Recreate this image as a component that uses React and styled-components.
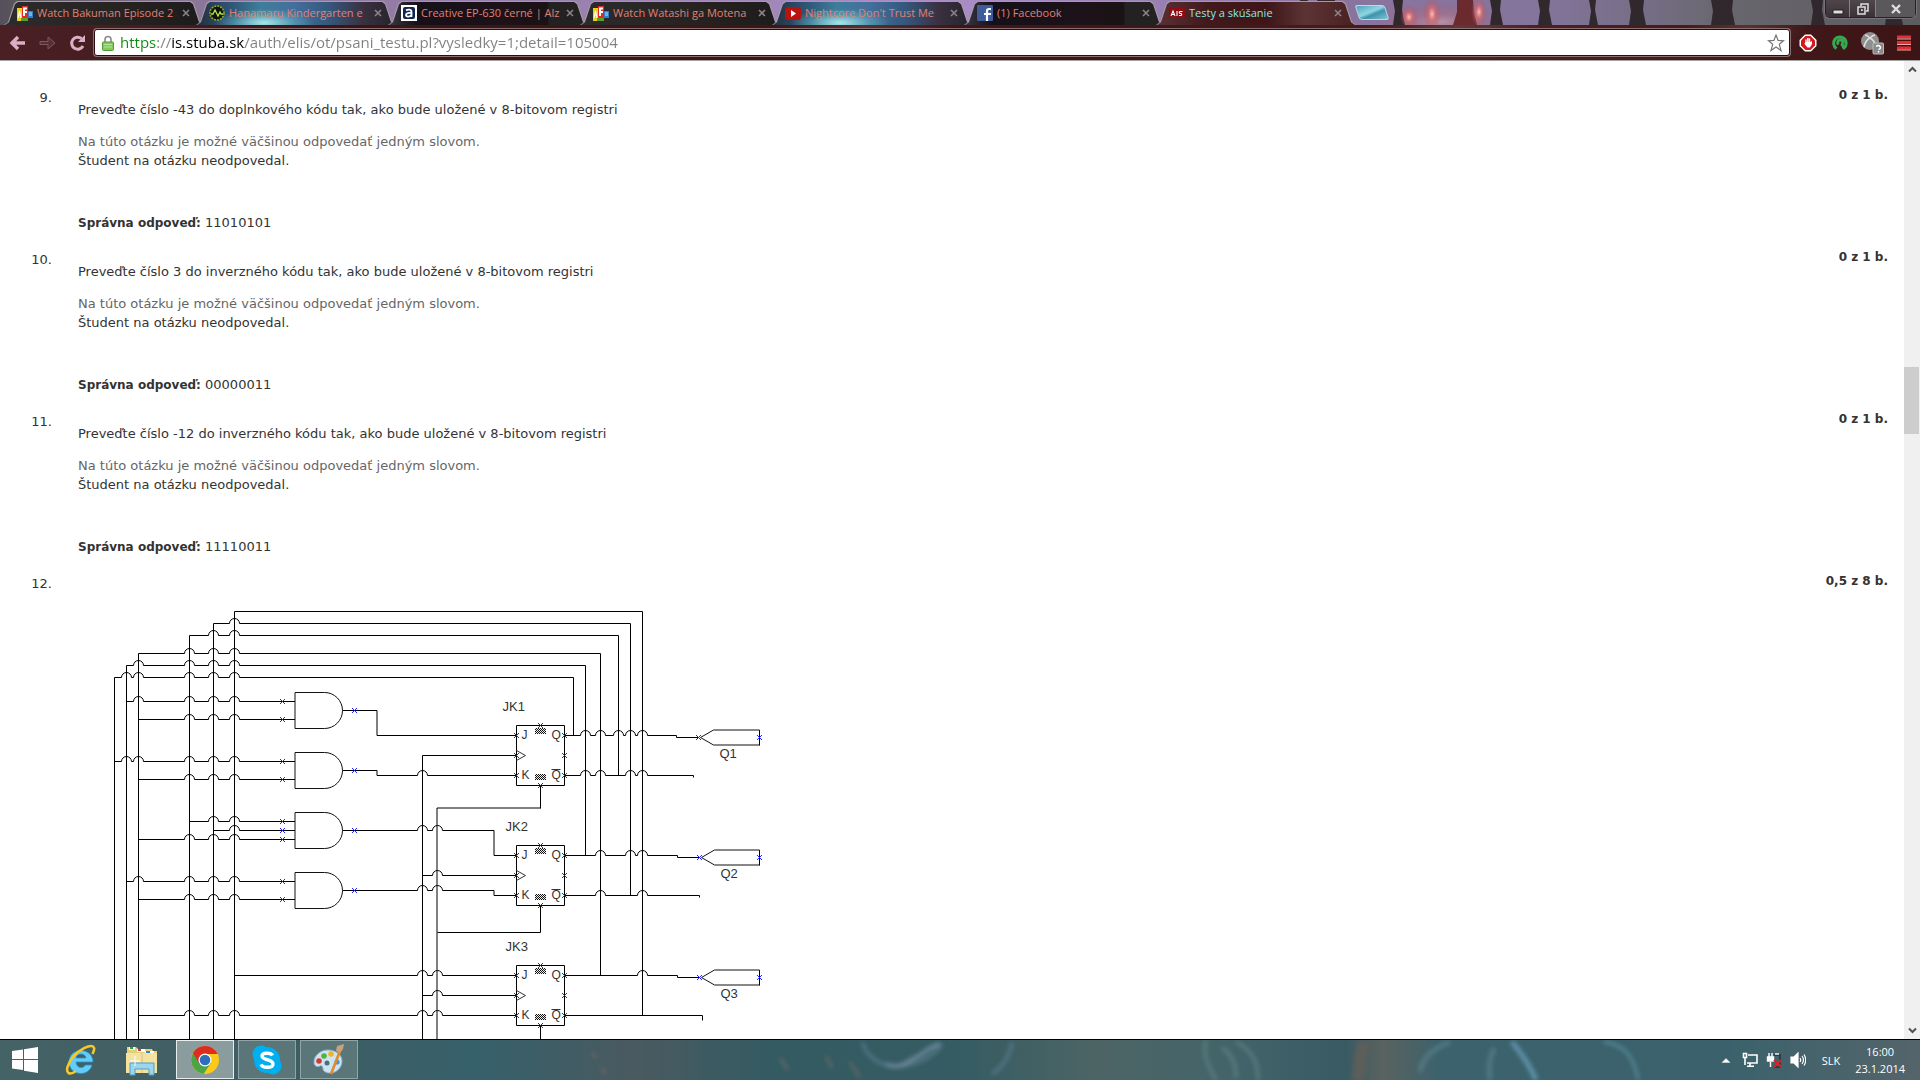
import React from 'react';
import styled, { createGlobalStyle } from 'styled-components';

const ui = '"Open Sans", "Noto Sans", sans-serif';

const Global = createGlobalStyle`
  * { box-sizing: border-box; }
  html, body { margin: 0; height: 100%; }
  body { overflow: hidden; background: #fff; }
  button { border: 0; padding: 0; background: none; font: inherit; color: inherit; cursor: pointer; }
  svg { display: block; flex: none; }
`;

const Screen = styled.div`
  display: flex;
  flex-direction: column;
  height: 100vh;
`;

/* ---------- browser frame ---------- */

const TabStrip = styled.header`
  position: relative;
  display: flex;
  height: 25px;
  padding-left: 4px;
  background: #8b78a0;
  overflow: hidden;
  font-family: ${ui};
`;

const Backdrop = styled.svg`
  position: absolute;
  inset: 0;
  width: 100%;
  height: 100%;
`;

const tones = {
  dark: 'linear-gradient(90deg, #2c2b2d, #262220 60%, #1d1b1c)',
  glow: 'radial-gradient(ellipse 50px 14px at 34% 90%, #a8e6ea, #5fb3c288 60%, transparent), linear-gradient(90deg, #24303e 0, #2f5878 18%, #3f7d9a 32%, #44709c 48%, #35597f 66%, #3a3040 84%, #25232a)',
  ember: 'linear-gradient(90deg, #38363f 0, #15101a 14%, #1d1218 60%, #1a1214 80%, #242122 81%)',
  active: 'linear-gradient(90deg, #5a3035, #421a1c 25%, #3f1517 55%, #5b3436 75%, #4a2022)',
};

const Tab = styled.div`
  position: relative;
  display: flex;
  align-items: center;
  flex: 0 1 192px;
  min-width: 0;
  height: 25px;
  padding: 0 5px 0 13px;
  font-size: 11px;
  line-height: 18px;
  color: ${(p) => (p.$tone === 'active' ? '#8be6ea' : '#e08074')};
  &::before, &::after {
    content: '';
    position: absolute;
    left: 0;
    right: -8px;
    bottom: 0;
    clip-path: polygon(0 100%, 4px 88%, 10px 10%, 13px 0, calc(100% - 13px) 0, calc(100% - 10px) 10%, calc(100% - 4px) 88%, 100% 100%);
  }
  &::before { top: 1px; background: #a79aa4; }
  &::after { top: 2px; left: 1px; right: -7px; background: ${(p) => tones[p.$tone]}; }
  > * { position: relative; z-index: 1; }
`;

const TabTitle = styled.button`
  flex: 1;
  min-width: 0;
  margin: 0 4px 0 4px;
  white-space: nowrap;
  text-align: left;
`;

const TabClose = styled.button`
  width: 10px;
  height: 10px;
  color: #8b8486;
`;

const NewTab = styled.button`
  position: relative;
  width: 30px;
  height: 15px;
  margin: 5px 0 0 9px;
  transform: skewX(18deg);
  border: 1px solid #b9dbe8;
  border-radius: 3px;
  background: linear-gradient(160deg, #4f9fba, #8fd6e2 45%, #3f92ac 60%, #7cc8d8);
`;

const WindowControls = styled.div`
  position: relative;
  display: flex;
  height: 18px;
  margin: 0 4px 0 auto;
  border: 1px solid #272325;
  border-top: 0;
  border-radius: 0 0 5px 5px;
  box-shadow: 0 0 0 1px #77727a;
`;

const WindowButton = styled.button`
  display: grid;
  place-items: center;
  width: ${(p) => p.$w}px;
  background: ${(p) => (p.$plain ? '#5a585a' : 'linear-gradient(#4e464b, #3a3236)')};
  & + & { border-left: 1px solid #8a8188; }
`;

const Toolbar = styled.div`
  display: flex;
  align-items: center;
  height: 36px;
  padding: 0 4px 0 6px;
  border-bottom: 1px solid #a5a2a4;
  background:
    radial-gradient(ellipse 90px 30px at 45% 0, #6b4a4a88, transparent),
    radial-gradient(ellipse 80px 30px at 76% 20%, #7a595988, transparent),
    radial-gradient(ellipse 60px 30px at 91% 10%, #7a595966, transparent),
    linear-gradient(90deg, #4a2024, #3c1416 20%, #401719 60%, #4a2022 80%, #3d1416);
`;

const NavButton = styled.button`
  display: grid;
  place-items: center;
  width: 24px;
  height: 24px;
  margin-right: ${(p) => p.$gap || 6}px;
`;

const AddressBar = styled.label`
  display: flex;
  align-items: center;
  flex: 1;
  height: 27px;
  margin-right: 6px;
  padding: 0 4px 0 7px;
  border: 1px solid #2a0d0f;
  border-radius: 3px;
  box-shadow: 0 0 0 1px #8b7071;
  background: #fff;
`;

const Url = styled.input`
  flex: 1;
  min-width: 0;
  height: 25px;
  margin-left: 6px;
  padding: 0 0 2px;
  border: 0;
  outline: 0;
  font: 15px/23px ${ui};
  color: #808080;
  background: linear-gradient(90deg, #0b8a12 37px, #808080 37px, #808080 51px, #000 51px, #000 125px, #808080 125px);
  background-clip: text;
  -webkit-text-fill-color: transparent;
`;

const Extensions = styled.div`
  display: flex;
  gap: 8px;
`;

const ExtButton = styled.button`
  display: grid;
  place-items: center;
  width: 24px;
  height: 24px;
`;

/* ---------- page ---------- */

const Viewport = styled.div`
  display: flex;
  flex: 1;
  min-height: 0;
`;

const Page = styled.main`
  flex: 1;
  min-width: 0;
  overflow: hidden;
  padding: 24px 16px 0 0;
  font: 13px/19px Verdana, "DejaVu Sans", sans-serif;
  color: #333;
`;

const Questions = styled.ol`
  margin: 0;
  padding: 0;
  list-style: none;
`;

const Question = styled.li`
  display: grid;
  grid-template-columns: 52px minmax(0, 1fr) auto;
  column-gap: 26px;
`;

const Ordinal = styled.span`
  padding-top: 3px;
  text-align: right;
`;

const Body = styled.div`
  padding: 15px 0;
`;

const Line = styled.p`
  margin: 0;
  margin-bottom: ${(p) => p.$after || 0}px;
  color: ${(p) => (p.$hint ? '#666' : '#333')};
  b { font-size: 12px; line-height: 16px; }
`;

const Score = styled.strong`
  font-size: 12px;
  line-height: 20px;
`;

const ScrollBar = styled.div`
  display: flex;
  flex-direction: column;
  align-items: center;
  width: 16px;
  background: #f0f0f0;
`;

const ScrollButton = styled.button`
  display: grid;
  place-items: center;
  width: 16px;
  height: 17px;
`;

const Track = styled.div`
  display: flex;
  flex-direction: column;
  flex: 1;
  width: 16px;
  &::before { content: ''; flex: 33; }
  &::after { content: ''; flex: 67; }
`;

const Thumb = styled.div`
  width: 15px;
  height: 67px;
  background: #cdcdcd;
`;

/* ---------- taskbar ---------- */

const TaskBar = styled.footer`
  position: relative;
  display: flex;
  align-items: stretch;
  height: 41px;
  border-top: 1px solid #000;
  background: #3a5f65;
  font: 11px/17px ${ui};
  color: #fff;
  overflow: hidden;
`;

const TaskButton = styled.button`
  position: relative;
  display: grid;
  place-items: center;
  width: ${(p) => p.$w}px;
  margin: 0 4px 1px 0;
  ${(p) => p.$open && `
    border: 1px solid ${p.$front ? '#e8eeee' : '#8fa5a8'};
    background: ${p.$front ? '#8b9c9f' : '#5b7679'};
  `}
`;

const Tray = styled.div`
  position: relative;
  display: flex;
  align-items: center;
  margin-left: auto;
  padding-right: 15px;
`;

const TrayIcons = styled.div`
  display: flex;
  align-items: center;
  gap: 8px;
  margin-right: 16px;
`;

const Clock = styled.time`
  margin-left: 15px;
  text-align: center;
`;

/* ---------- icons ---------- */

const WatchIcon = () => (
  <svg width="16" height="16" viewBox="0 0 16 16">
    <path d="M0 3h5v13H0z" fill="#e9d21f" /><path d="M5 1h6v12H5z" fill="#e02b20" />
    <path d="M4 13h7v3H4z" fill="#5a9e2c" /><path d="M11 6h5v7h-5z" fill="#2f7fd0" />
    <path d="M1 13l1.500-7L4 13M1.500 10h2" stroke="#fff" fill="none" />
    <path d="M7 11V3.500h3M7 7h3" stroke="#fff" strokeWidth="2" fill="none" />
    <path d="M12 8h3M12 10h3" stroke="#bfe0ff" fill="none" />
  </svg>
);
const PulseIcon = () => (
  <svg width="16" height="16" viewBox="0 0 16 16">
    <circle cx="8" cy="8" r="7" fill="#0d1408" stroke="#98a82e" strokeWidth="1.500" strokeDasharray="2 1" />
    <path d="M2 9h2l2-4 3 6 2-4 1 2h2" stroke="#b6e34a" strokeWidth="1.300" fill="none" />
  </svg>
);
const AlzaIcon = () => (
  <svg width="16" height="16" viewBox="0 0 16 16">
    <rect width="16" height="16" fill="#fff" /><rect x="2" y="2" width="12" height="12" rx="2" fill="#10264f" />
    <path d="M5 5.500c2-1.500 5.500-1.200 5.500 1.500v5M10 8c-2-.5-5 0-5 2s3.500 2.200 5.300 0" stroke="#fff" strokeWidth="1.800" fill="none" />
  </svg>
);
const TubeIcon = () => (
  <svg width="16" height="16" viewBox="0 0 16 16">
    <rect y="2" width="16" height="13" rx="3" fill="#b9120f" /><path d="M6 5l5 3.500L6 12z" fill="#fff" />
  </svg>
);
const FbIcon = () => (
  <svg width="16" height="16" viewBox="0 0 16 16">
    <rect width="16" height="16" rx="1" fill="#3f5c9c" />
    <path d="M14 4h-2q-2 0-2 2v10M7 9h7" stroke="#fff" strokeWidth="2.200" fill="none" />
  </svg>
);
const AisIcon = () => (
  <svg width="16" height="16" viewBox="0 0 16 16">
    <rect y="3" width="16" height="10" rx="1" fill="#8c0d12" />
    <path d="M2 11l2-5 2 5M2.500 9.500h3M8 6v5M13.500 6.500h-2.500q-1.500 1 0 2h1q1.500 1 0 2H10" stroke="#fff" strokeWidth="1.100" fill="none" />
  </svg>
);
const CrossIcon = () => (
  <svg width="10" height="10" viewBox="0 0 10 10"><path d="M2 2l6 6M8 2L2 8" stroke="currentColor" strokeWidth="1.600" /></svg>
);

const IEIcon = () => (
  <svg width="32" height="32" viewBox="0 0 32 32">
    <path d="M28 18H11c.5 3.500 2 5.500 5 5.500 2 0 3.400-.8 4.300-2.500h6.700C25.500 26.500 21 29.500 16 29.500 9 29.500 4 24.500 4 18S9 6.500 16 6.500s12 5 12 11.500zm-7-4c-.4-2.400-2.200-4-5-4s-4.500 1.600-5 4z" fill="#62cdf6" stroke="#2a8fd0" strokeWidth=".8" />
    <path d="M27.500 10c1.800-3.500 2.200-6.500.5-7.500C25 .5 15 5 8.500 12.500 2.500 19.500.5 27 3.500 29c1.800 1 4.500.2 7.500-2" stroke="#f6c927" strokeWidth="2.600" fill="none" />
  </svg>
);
const FolderIcon = () => (
  <svg width="34" height="32" viewBox="0 0 34 32">
    <path d="M2 3h9l2 2h14l1 2h4v22H2z" fill="#e4cf7f" />
    <path d="M4 3h6v3H4z" fill="#fff" /><path d="M5 3h3v2H5z" fill="#22a62c" />
    <path d="M12 5h8v3h-8z" fill="#fff" /><path d="M13 5h3v2h-3z" fill="#d8402a" />
    <path d="M20 7h9v3h-9z" fill="#fff" /><path d="M21 7h4v2h-4z" fill="#2b8ad6" />
    <path d="M1 9h31v20H1z" fill="#f4e3a0" /><path d="M17 9v20" stroke="#d9c27a" />
    <path d="M5 19h24v12h-5v-6H10v6H5z" fill="#9bd5ee" stroke="#4d9fc9" />
    <path d="M10 12v10M5 17h10" stroke="#fff" />
  </svg>
);
const ChromeIcon = () => (
  <svg width="28" height="28" viewBox="0 0 28 28">
    <circle cx="14" cy="14" r="14" fill="#fbc916" />
    <path d="M14 14L2 7A14 14 0 0 0 12.500 27.900L20 17z" fill="#4ba446" />
    <path d="M14 8h12.600A14 14 0 0 0 1.900 7L8 17l6-3z" fill="#dd2c22" />
    <circle cx="14" cy="14" r="6.500" fill="#fff" /><circle cx="14" cy="14" r="5.300" fill="#2f6fba" />
  </svg>
);
const SkypeIcon = () => (
  <svg width="30" height="30" viewBox="0 0 30 30">
    <circle cx="9" cy="9" r="8.500" fill="#00aff0" /><circle cx="21" cy="21" r="8.500" fill="#00aff0" /><circle cx="15" cy="15" r="13" fill="#00aff0" />
    <path d="M20.500 10.500c-1.500-3-10.500-3.300-10.500.6 0 4.500 11 2.800 11 7.800 0 4.500-10.500 4.400-12 .4" stroke="#fff" strokeWidth="3.400" fill="none" />
  </svg>
);
const PaintIcon = () => (
  <svg width="32" height="32" viewBox="0 0 32 32">
    <path d="M15 6C7 6 1 12 1 18c0 5 4 5 6 4s3 1 3 3 3 4 7 4c7 0 12-6 12-12S23 6 15 6z" fill="#cfe4f2" stroke="#8db4cc" />
    <circle cx="6" cy="17" r="2.800" fill="#d8392e" /><circle cx="11" cy="12" r="2.800" fill="#58b03a" /><circle cx="18" cy="10" r="2.800" fill="#f0b429" />
    <circle cx="14" cy="19" r="2.500" fill="#4a7078" /><circle cx="24" cy="18" r="2.600" fill="#4b8fd8" />
    <path d="M27 7L18 30" stroke="#e08a2c" strokeWidth="2.600" /><path d="M24 2l7-2-1 5-3 4-4-2z" fill="#c8a27c" />
  </svg>
);

/* ---------- schematic ---------- */

const Drawing = styled.svg`
  width: 720px;
  height: 480px;
  font: 13px "Liberation Sans", Arial, sans-serif;
  .fine { font-size: 12px; }
`;

// A horizontal wire that jumps over each crossing wire with a small arc.
const wire = (x, y, jumps, end) =>
  `M${x} ${y}` + jumps.map((j) => `H${j - 5}A5 5 0 0 1 ${j + 5} ${y}`).join('') + `H${end}`;

const bus = [189, 213, 234];
const wires = [
  `M234 1100V611H642V1015`,
  `M213 1100V623${wire(213, 623, [234], 630).slice(8)}V895`,
  `M189 1100V635${wire(189, 635, [213, 234], 618).slice(8)}V775`,
  `M138 1100V653${wire(138, 653, bus, 600).slice(8)}V975`,
  `M126 1100V665${wire(126, 665, [138, ...bus], 585).slice(8)}V855`,
  `M114 1100V677${wire(114, 677, [126, 138, ...bus], 573).slice(8)}V735`,
  wire(126, 701, [138, ...bus], 295),
  wire(138, 719, bus, 295),
  wire(114, 761, [126, 138, ...bus], 295),
  wire(138, 779, bus, 295),
  wire(189, 821, [213, 234], 295),
  wire(213, 830, [234], 295),
  wire(138, 839, bus, 295),
  wire(126, 881, [138, ...bus], 295),
  wire(138, 899, bus, 295),
  `M342 710H376.500V735H516`,
  `M342 770H376.500V775${wire(377, 775, [422], 516).slice(8)}`,
  `${wire(342, 830, [422, 437], 493.5)}V855H516`,
  `${wire(342, 890, [422, 437], 493.5)}V895H516`,
  wire(234, 975, [422, 437], 516),
  wire(138, 1015, [...bus, 422, 437], 516),
  `M422 1100V755H516`,
  wire(422, 875, [437], 516),
  wire(422, 995, [437], 516),
  `M540 785V808`,
  `M540 905V932H437`,
  `M540 1025V1100`,
  `${wire(564, 735, [585, 600, 618, 630, 642], 676)}V737H698`,
  `${wire(564, 775, [585, 600, 630, 642], 693)}V777`,
  `${wire(564, 855, [600, 630, 642], 677)}V857H699`,
  `${wire(564, 895, [600, 642], 699)}V897`,
  `${wire(564, 975, [642], 677)}V977H699`,
  `M564 1015H702V1020`,
];

const Mark = ({ x, y }) => (
  <path d={`M${x - 2.5} ${y - 2.5}l5 5M${x + 2.5} ${y - 2.5}l-5 5`} stroke="#2323ff" />
);

const Gate = ({ y, pins }) => (
  <g>
    <path d={`M294.500 ${y - 18}H324A18 18 0 0 1 324 ${y + 18}H294.500z`} fill="#fff" stroke="#111" />
    {pins.map((p) => <Mark key={p} x={282} y={p} />)}
    <Mark x={354} y={y} />
  </g>
);

const FlipFlop = ({ y, name, labelX }) => (
  <g>
    <path d={`M516 ${y}H564V${y + 60}H516z`} fill="#fff" stroke="#000" />
    <path d={`M516 ${y + 25}l9 5l-9 5`} fill="none" stroke="#333" />
    <path d={`M534.500 ${y + 2.5}h11v6h-11zM534.500 ${y + 48.5}h11v6h-11z`} fill="url(#dither)" />
    <path d={`M551 ${y + 44}h9`} stroke="#333" />
    <g fill="#333">
      <text x={labelX} y={y - 15}>{name}</text>
      <text className="fine" x="521" y={y + 13}>J</text>
      <text className="fine" x="521" y={y + 53}>K</text>
      <text className="fine" x="551" y={y + 13}>Q</text>
      <text className="fine" x="551" y={y + 53}>Q</text>
    </g>
    {[[516, 10], [516, 30], [516, 50], [564, 10], [564, 30], [564, 50], [540, 0], [540, 60]].map(([x, dy]) => (
      <Mark key={`${x}-${dy}`} x={x} y={y + dy} />
    ))}
  </g>
);

const Output = ({ y, x, name }) => (
  <g>
    <path d={`M${x + 2} ${y}L${x + 15} ${y - 7.5}H759V${y + 7.5}H${x + 15}z`} fill="#fff" stroke="#111" />
    <path d={`M759 ${y - 7}v15`} stroke="#000" />
    <Mark x={x} y={y} /><Mark x={759} y={y} />
    <text x={x + 21} y={y + 20} fill="#333">{name}</text>
  </g>
);

const Circuit = () => (
  <Drawing viewBox="78 586 720 480" role="img" aria-label="JK1 JK2 JK3">
    <defs>
      <pattern id="dither" width="2" height="2" patternUnits="userSpaceOnUse" patternTransform="translate(.5 .5)">
        <path d="M0 0h2v2h-2z" fill="#eee" /><path d="M0 0h1v1h-1zM1 1h1v1h-1z" fill="#111" />
      </pattern>
    </defs>
    <g transform="translate(.5 .5)">
      <path d={wires.join('')} fill="none" stroke="#000" />
      <path d="M540 807.500H436.500V1100" fill="none" stroke="#000" />
      <Gate y={710} pins={[701, 719]} />
      <Gate y={770} pins={[761, 779]} />
      <Gate y={830} pins={[821, 830, 839]} />
      <Gate y={890} pins={[881, 899]} />
      <FlipFlop y={725} name="JK1" labelX={502} />
      <FlipFlop y={845} name="JK2" labelX={505} />
      <FlipFlop y={965} name="JK3" labelX={505} />
      <Output x={698} y={737} name="Q1" />
      <Output x={699} y={857} name="Q2" />
      <Output x={699} y={977} name="Q3" />
    </g>
  </Drawing>
);

/* ---------- data ---------- */

const tabs = [
  { title: 'Watch Bakuman Episode 2', tone: 'dark', Icon: WatchIcon },
  { title: 'Hanamaru Kindergarten e', tone: 'glow', Icon: PulseIcon },
  { title: 'Creative EP-630 černé | Alz', tone: 'ember', Icon: AlzaIcon },
  { title: 'Watch Watashi ga Motena', tone: 'dark', Icon: WatchIcon },
  { title: "Nightcore Don't Trust Me", tone: 'glow', Icon: TubeIcon },
  { title: '(1) Facebook', tone: 'ember', Icon: FbIcon },
  { title: 'Testy a skúšanie', tone: 'active', Icon: AisIcon },
];

const questions = [
  { n: 9, text: 'Preveďte číslo -43 do doplnkového kódu tak, ako bude uložené v 8-bitovom registri', answer: '11010101' },
  { n: 10, text: 'Preveďte číslo 3 do inverzného kódu tak, ako bude uložené v 8-bitovom registri', answer: '00000011' },
  { n: 11, text: 'Preveďte číslo -12 do inverzného kódu tak, ako bude uložené v 8-bitovom registri', answer: '11110011' },
];

const trunks = [
  { x: 1328, w: 7 }, { x: 1393, w: 10 }, { x: 1490, w: 11 }, { x: 1538, w: 12 }, { x: 1589, w: 7 },
  { x: 1629, w: 15 }, { x: 1711, w: 22 }, { x: 1811, w: 12 }, { x: 1885, w: 16 },
];

export default function App() {
  return (
    <Screen>
      <Global />
      <TabStrip>
        <Backdrop viewBox="0 0 1920 25" preserveAspectRatio="none" aria-hidden="true">
          <defs>
            <linearGradient id="sky" gradientUnits="userSpaceOnUse" x1="0" y1="0" x2="1920" y2="0">
              <stop offset="0" stopColor="#555059" /><stop offset=".1" stopColor="#8a7699" /><stop offset=".5" stopColor="#a98cc6" />
              <stop offset=".7" stopColor="#8a749f" /><stop offset=".8" stopColor="#84759c" />
              <stop offset=".86" stopColor="#756d84" /><stop offset=".9" stopColor="#68666d" /><stop offset="1" stopColor="#5c5b5e" />
            </linearGradient>
            <radialGradient id="flame"><stop offset="0" stopColor="#ffc0b4" /><stop offset=".4" stopColor="#d9696e" stopOpacity=".7" /><stop offset="1" stopColor="#b04a5c" stopOpacity="0" /></radialGradient>
          </defs>
          <rect width="1920" height="25" fill="url(#sky)" />
          <ellipse cx="1440" cy="22" rx="70" ry="20" fill="url(#flame)" opacity=".4" />
          <path d="M1457 0h16l1 12 3 13h-24l4-13z" fill="#6b2a2e" />
          {trunks.map(({ x, w }) => (
            <path key={x} d={`M${x} 0L${x + w} 0L${x + w - 1} 10L${x + w + 2} 25L${x} 25L${x + 2} 11Z`} fill="#30282c" />
          ))}
          <ellipse cx="1409" cy="17" rx="9" ry="12" fill="url(#flame)" /><ellipse cx="1432" cy="14" rx="9" ry="17" fill="url(#flame)" />
          <ellipse cx="1479" cy="12" rx="8" ry="16" fill="url(#flame)" />
          <path d="M1300 0h8l-3 8h-3zM1317 0h14l-6 6h-5z" fill="#30282c" />
        </Backdrop>
        {tabs.map(({ title, tone, Icon }) => (
          <Tab key={title} $tone={tone}>
            <Icon />
            <TabTitle>{title}</TabTitle>
            <TabClose aria-label="Close tab"><CrossIcon /></TabClose>
          </Tab>
        ))}
        <NewTab aria-label="New tab" />
        <WindowControls>
          <WindowButton $w={23} aria-label="Minimize">
            <svg width="12" height="12"><path d="M1 7h10v4H1z" fill="#ddd" stroke="#222" /></svg>
          </WindowButton>
          <WindowButton $w={26} aria-label="Restore">
            <svg width="14" height="14" fill="none" stroke="#ddd" strokeWidth="1.500"><path d="M5 4V2h7v7h-2M2 5h7v7H2zM5 8h1v1" /></svg>
          </WindowButton>
          <WindowButton $w={40} $plain aria-label="Close">
            <svg width="12" height="12"><path d="M2 2l8 8M10 2l-8 8" stroke="#ddd" strokeWidth="2.400" /></svg>
          </WindowButton>
        </WindowControls>
      </TabStrip>

      <Toolbar>
        <NavButton aria-label="Back">
          <svg width="18" height="16" viewBox="0 0 18 16"><path d="M16 8H4M9 2L3 8l6 6" stroke="#d9afc4" strokeWidth="3.400" fill="none" /></svg>
        </NavButton>
        <NavButton aria-label="Forward">
          <svg width="18" height="16" viewBox="0 0 18 16"><path d="M1 6.500h8V2l7 6-7 6V9.500H1z" stroke="#7d5960" fill="#552f34" /></svg>
        </NavButton>
        <NavButton aria-label="Reload" $gap={4}>
          <svg width="18" height="18" viewBox="0 0 18 18"><path d="M14 12A6 6 0 1 1 12.500 4.500" stroke="#d9afc4" strokeWidth="3" fill="none" /><path d="M16 1v7H9z" fill="#d9afc4" /></svg>
        </NavButton>
        <AddressBar>
          <svg width="12" height="16" viewBox="0 0 12 16">
            <path d="M3 8V4.500a3 3 0 0 1 6 0V8" stroke="#8a8a8a" strokeWidth="1.600" fill="none" />
            <rect x=".5" y="7" width="11" height="8.500" rx="1" fill="#86c95c" stroke="#4f9a35" /><path d="M2 9.500h8M2 12h8" stroke="#b7e39a" />
          </svg>
          <Url aria-label="Address" defaultValue="https://is.stuba.sk/auth/elis/ot/psani_testu.pl?vysledky=1;detail=105004" />
          <svg width="18" height="18" viewBox="0 0 18 18"><path d="M9 1l2.100 5.400 5.400.4-4.200 3.500 1.700 6.200L9 13l-5 3.500 1.700-6.200L1.500 6.800l5.400-.4z" fill="#fff" stroke="#777" strokeWidth="1.200" /></svg>
        </AddressBar>
        <Extensions>
          <ExtButton aria-label="AdBlock">
            <svg width="18" height="18" viewBox="0 0 18 18"><path d="M6 .5h6L17.500 6v6L12 17.500H6L.5 12V6z" fill="#fff" /><path d="M6.500 2h5L16 6.500v5L11.500 16h-5L2 11.500v-5z" fill="#d9161b" />
              <path d="M7 9V5.500M8.800 8V4M10.500 8V4.500" stroke="#fff" strokeWidth="1.400" /><path d="M6.300 8h5l1.700-1v3l-2 3.500H8.500L5.500 10z" fill="#fff" /></svg>
          </ExtButton>
          <ExtButton aria-label="Extension">
            <svg width="18" height="18" viewBox="0 0 18 18"><path d="M5.500 14.500A6.300 6.300 0 1 1 13 14L11 10.500A2.600 2.600 0 1 0 7.500 10.500" stroke="#35a852" strokeWidth="3" fill="none" strokeLinejoin="round" /></svg>
          </ExtButton>
          <ExtButton aria-label="Controller">
            <svg width="24" height="24" viewBox="0 0 24 24"><circle cx="10" cy="10" r="9" fill="#8f8f8f" /><path d="M4 16c1-5 4-8 6-9 2 1 5 4 6 9M5 4c2 0 4 2 5 3 1-1 3-3 5-3" stroke="#ddd" strokeWidth="1.600" fill="none" />
              <rect x="13" y="12" width="10.500" height="11" rx="1" fill="#8a8a8a" stroke="#bbb" /><path d="M16 15.500q2.500-2 4 0t-1.500 3M18.500 20v1.500" stroke="#fff" strokeWidth="1.500" fill="none" /></svg>
          </ExtButton>
          <ExtButton aria-label="Menu">
            <svg width="14" height="16"><path d="M0 2h14M0 7.500h14M0 13h14" stroke="#e03034" strokeWidth="3" /><path d="M0 4h14M0 9.500h14M0 15h14" stroke="#f4a3a3" /></svg>
          </ExtButton>
        </Extensions>
      </Toolbar>

      <Viewport>
        <Page>
          <Questions>
            {questions.map((q) => (
              <Question key={q.n}>
                <Ordinal>{q.n}.</Ordinal>
                <Body>
                  <Line $after={13}>{q.text}</Line>
                  <Line $hint>Na túto otázku je možné väčšinou odpovedať jedným slovom.</Line>
                  <Line $after={43}>Študent na otázku neodpovedal.</Line>
                  <Line><b>Správna odpoveď:</b> {q.answer}</Line>
                </Body>
                <Score>0 z 1 b.</Score>
              </Question>
            ))}
            <Question>
              <Ordinal>12.</Ordinal>
              <Body><Circuit /></Body>
              <Score>0,5 z 8 b.</Score>
            </Question>
          </Questions>
        </Page>
        <ScrollBar>
          <ScrollButton aria-label="Scroll up">
            <svg width="9" height="7"><path d="M1 5.500l3.500-3.500L8 5.500" stroke="#505050" strokeWidth="2" fill="none" /></svg>
          </ScrollButton>
          <Track><Thumb /></Track>
          <ScrollButton aria-label="Scroll down">
            <svg width="9" height="7"><path d="M1 1.500L4.500 5 8 1.500" stroke="#505050" strokeWidth="2" fill="none" /></svg>
          </ScrollButton>
        </ScrollBar>
      </Viewport>

      <TaskBar>
        <Backdrop viewBox="0 0 1920 40" preserveAspectRatio="none" aria-hidden="true">
          <defs>
            <linearGradient id="sea">
              <stop offset="0" stopColor="#456266" /><stop offset=".15" stopColor="#3f5d63" /><stop offset=".25" stopColor="#36606a" /><stop offset=".33" stopColor="#4a5a60" />
              <stop offset=".4" stopColor="#345b62" /><stop offset=".5" stopColor="#345c62" /><stop offset=".57" stopColor="#4d6465" /><stop offset=".64" stopColor="#44646a" />
              <stop offset=".7" stopColor="#385a63" /><stop offset=".72" stopColor="#5a625f" /><stop offset=".75" stopColor="#3c626d" /><stop offset=".9" stopColor="#3b626c" /><stop offset="1" stopColor="#54646a" />
            </linearGradient>
            <filter id="soft" x="-20%" width="140%"><feGaussianBlur stdDeviation="2" /></filter>
          </defs>
          <rect width="1920" height="40" fill="url(#sea)" />
          <g fill="none" filter="url(#soft)" opacity=".7">
            <path d="M862 2c6 18 22 26 40 24 16-2 30-8 40-22M1012 2c-2 14-8 24-20 32" stroke="#587c90" strokeWidth="4" />
            <path d="M886 24c14 6 20-2 32-8 8-4 12-10 22-12" stroke="#8299b0" strokeWidth="4" />
            <path d="M1206 0c-4 14 2 26 10 40M1236 2c16 8 22 20 22 38M1222 8c10 6 14 18 14 30" stroke="#5f8383" strokeWidth="4" />
            <path d="M1420 32c2-14 14-24 30-30M1490 40c-2-14 0-22 4-32" stroke="#58828f" strokeWidth="5" />
            <path d="M1512 2c10 12 18 24 24 38" stroke="#6fa6c8" strokeWidth="5" />
            <path d="M1604 2c18 2 30 12 34 38" stroke="#5f97ac" strokeWidth="3" />
            <path d="M780 18l8 12M826 16l6 12M850 22l10 16M592 12l4 6M602 28l3 6" stroke="#8d7467" strokeWidth="2" />
            <path d="M1364 2c-6 14-2 28-8 38" stroke="#665f58" strokeWidth="12" />
          </g>
        </Backdrop>
        <TaskButton $w={50} aria-label="Start">
          <svg width="26" height="26" viewBox="0 0 26 26"><path d="M0 4l11-1.500V12H0zM12 2.300L26 0v12H12zM0 13h11v10L0 21.500zM12 13h14v13l-14-2.300z" fill="#fff" /></svg>
        </TaskButton>
        <TaskButton $w={54} aria-label="Internet Explorer"><IEIcon /></TaskButton>
        <TaskButton $w={60} aria-label="File Explorer"><FolderIcon /></TaskButton>
        <TaskButton $w={58} $open $front aria-label="Chrome"><ChromeIcon /></TaskButton>
        <TaskButton $w={58} $open aria-label="Skype"><SkypeIcon /></TaskButton>
        <TaskButton $w={58} $open aria-label="Paint"><PaintIcon /></TaskButton>
        <Tray>
          <TrayIcons>
            <svg width="16" height="16"><path d="M4 10.500l4-4 4 4z" fill="#fff" stroke="#dfe8ea" strokeWidth=".5" /></svg>
            <svg width="16" height="16" fill="none" stroke="#fff" strokeWidth="1.600"><path d="M6 3h9v8H5M8 11v3M5 14.200h7M3 6v7M1.500 1.500h3v4h-3z" /></svg>
            <svg width="16" height="16" fill="none" stroke="#fff" strokeWidth="1.400"><path d="M8 3h6v12H8" stroke="#2b3d42" strokeWidth="2" /><path d="M9 2h4" /><path d="M3 1v4M6 1v4M4.500 10v5" /><path d="M1.500 5h6v4h-6z" fill="#fff" /><path d="M8 8l7 7M15 8l-7 7" stroke="#e01f26" strokeWidth="2.200" /></svg>
            <svg width="16" height="16" fill="none" stroke="#fff" strokeWidth="1.200"><path d="M1 5h3l4-4v14l-4-4H1z" fill="#fff" /><path d="M10 6q1.500 2 0 4M12 4q3 4 0 8M14 2.500q3.500 5.500 0 11" /></svg>
          </TrayIcons>
          <span>SLK</span>
          <Clock>16:00<br />23.1.2014</Clock>
        </Tray>
      </TaskBar>
    </Screen>
  );
}
